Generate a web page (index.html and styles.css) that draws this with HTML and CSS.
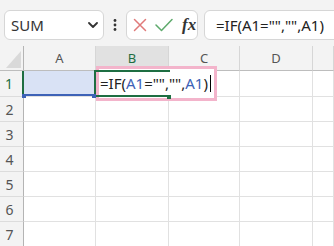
FILE: index.html
```html
<!DOCTYPE html>
<html lang="ja">
<head>
  <meta charset="UTF-8">
  <title>Sheet</title>
  <link rel="stylesheet" href="styles.css">
</head>
<body>
  <!-- Formula bar -->
  <div class="toolbar">
    <div class="namebox">
      <span>SUM</span>
      <svg class="chevron" width="10" height="6" viewBox="0 0 10 6"><path d="M1 1 L5 5 L9 1" fill="none" stroke="#333" stroke-width="1.8" stroke-linecap="round" stroke-linejoin="round"/></svg>
    </div>
    <div class="more">
      <svg width="4" height="12" viewBox="0 0 4 12"><circle cx="2" cy="1.5" r="1.4" fill="#333"/><circle cx="2" cy="6" r="1.4" fill="#333"/><circle cx="2" cy="10.5" r="1.4" fill="#333"/></svg>
    </div>
    <div class="fbuttons">
      <svg width="14" height="14" viewBox="0 0 14 14"><path d="M1.5 1.5 L12.5 12.5 M12.5 1.5 L1.5 12.5" stroke="#e07a7a" stroke-width="1.5" fill="none" stroke-linecap="round"/></svg>
      <svg width="18" height="14" viewBox="0 0 18 14"><path d="M1 7 L6.5 12.5 L17 1.5" stroke="#5eaa6c" stroke-width="1.5" fill="none" stroke-linecap="round" stroke-linejoin="round"/></svg>
      <span class="fx">fx</span>
    </div>
    <div class="formula">=IF(A1="","",A1)</div>
  </div>

  <!-- Grid -->
  <div class="sheet">
    <div class="grid">
      <div class="hd corner"><span class="tri"></span></div>
      <div class="hd col">A</div>
      <div class="hd col sel">B</div>
      <div class="hd col">C</div>
      <div class="hd col">D</div>
      <div class="hd col"></div>

      <div class="hd row sel">1</div>
      <div class="cell ref"></div>
      <div class="cell"></div>
      <div class="cell"></div>
      <div class="cell"></div>
      <div class="cell"></div>

      <div class="hd row">2</div>
      <div class="cell"></div><div class="cell"></div><div class="cell"></div><div class="cell"></div><div class="cell"></div>
      <div class="hd row">3</div>
      <div class="cell"></div><div class="cell"></div><div class="cell"></div><div class="cell"></div><div class="cell"></div>
      <div class="hd row">4</div>
      <div class="cell"></div><div class="cell"></div><div class="cell"></div><div class="cell"></div><div class="cell"></div>
      <div class="hd row">5</div>
      <div class="cell"></div><div class="cell"></div><div class="cell"></div><div class="cell"></div><div class="cell"></div>
      <div class="hd row">6</div>
      <div class="cell"></div><div class="cell"></div><div class="cell"></div><div class="cell"></div><div class="cell"></div>
      <div class="hd row">7</div>
      <div class="cell"></div><div class="cell"></div><div class="cell"></div><div class="cell"></div><div class="cell"></div>
    </div>

    <!-- Selection and in-cell editor -->
    <div class="editor">=IF(<span class="ref-t">A1</span>="","",<span class="ref-t">A1</span>)<span class="caret"></span></div>
    <div class="active"></div>
    <span class="handle ref-l"></span>
    <span class="handle ref-r"></span>
    <span class="handle fill"></span>
  </div>
</body>
</html>
```

FILE: styles.css
```css
/* Base */
body {
  margin: 0;
  font-family: "Noto Sans", "Noto Sans CJK JP", sans-serif;
  background-color: #ffffff;
  overflow: hidden;
  width: 334px;
  height: 246px;
}

/* Formula bar */
.toolbar {
  display: flex;
  align-items: flex-start;
  height: 46px;
  box-sizing: border-box;
  padding: 10px 0 0 4px;
  background-color: #f3f3f3;
  overflow: hidden;
}

.namebox {
  display: flex;
  align-items: center;
  justify-content: space-between;
  width: 100px;
  height: 30px;
  box-sizing: border-box;
  padding: 0 5px 0 6px;
  background-color: white;
  border: 1px solid #d6d6d6;
  border-radius: 6px;
  font-size: 15px;
  color: #333;
}

.more {
  width: 22px;
  height: 30px;
  display: flex;
  align-items: center;
  justify-content: center;
}

.fbuttons {
  display: flex;
  align-items: center;
  gap: 8px;
  width: 72px;
  height: 30px;
  box-sizing: border-box;
  padding-left: 6px;
  background-color: white;
  border: 1px solid #d6d6d6;
  border-radius: 6px;
}

.fx {
  font-family: "Liberation Serif", serif;
  font-style: italic;
  font-weight: bold;
  font-size: 17px;
  color: #333;
  margin-left: 1px;
}

.formula {
  flex: 1;
  height: 30px;
  box-sizing: border-box;
  margin-left: 6px;
  margin-right: -12px;
  padding-left: 11px;
  line-height: 28px;
  background-color: white;
  border: 1px solid #d6d6d6;
  border-radius: 6px;
  font-size: 15px;
  color: #222;
  white-space: nowrap;
}

/* Sheet grid */
.sheet {
  position: relative;
}

.grid {
  display: grid;
  grid-template-columns: 24px 72px 73px 71px 73px 1fr;
  grid-template-rows: 25px 26px;
  grid-auto-rows: 25px;
}

.grid > div {
  box-sizing: border-box;
  border-right: 1px solid #e1e1e1;
  border-bottom: 1px solid #e1e1e1;
}

.hd {
  display: flex;
  align-items: center;
  justify-content: center;
  background-color: #f3f3f3;
  font-size: 13px;
  color: #555;
}

.hd.col {
  border-right-color: #d6d6d6;
  border-bottom-color: #bdbdbd;
}

.hd.col.sel {
  background-color: #e1e1e1;
  color: #1e6e42;
}

.hd.corner {
  position: relative;
  border-right-color: #b4b4b4;
  border-bottom-color: #bdbdbd;
}

.tri {
  position: absolute;
  right: 2px;
  bottom: 2px;
  width: 0;
  height: 0;
  border-left: 15px solid transparent;
  border-bottom: 17px solid #d9d9d9;
}

.hd.row {
  padding-right: 4px;
  font-size: 14px;
  border-right-color: #b4b4b4;
  border-bottom-color: #dcdcdc;
}

.hd.row.sel {
  color: #1e6e42;
  border-right: 2px solid #1e6e42;
}

.cell.ref {
  background-color: #d9e2f5;
  box-shadow: inset 0 -2px #3d62b7;
}

/* In-cell editor, active cell and reference handles */
.editor {
  position: absolute;
  left: 96px;
  top: 20px;
  width: 121px;
  height: 35px;
  box-sizing: border-box;
  padding-left: 1px;
  border: 3px solid #f3b4cb;
  background-color: white;
  font-family: "Noto Sans", sans-serif;
  font-size: 15px;
  line-height: 29px;
  color: #222;
  white-space: nowrap;
}

.ref-t {
  color: #3d62b7;
}

.caret {
  display: inline-block;
  width: 1px;
  height: 17px;
  margin-left: 2px;
  vertical-align: -3px;
  background-color: #000;
}

.active {
  position: absolute;
  left: 94px;
  top: 24px;
  width: 76px;
  height: 27px;
  box-sizing: border-box;
  border: 2px solid #1e6e42;
  border-right: none;
}

.handle {
  position: absolute;
  width: 4px;
  height: 4px;
  background-color: #3d62b7;
}

.ref-l { left: 22px; top: 48px; }
.ref-r { left: 92px; top: 48px; }
.handle.fill { left: 167px; top: 49px; background-color: #1e6e42; }
```
